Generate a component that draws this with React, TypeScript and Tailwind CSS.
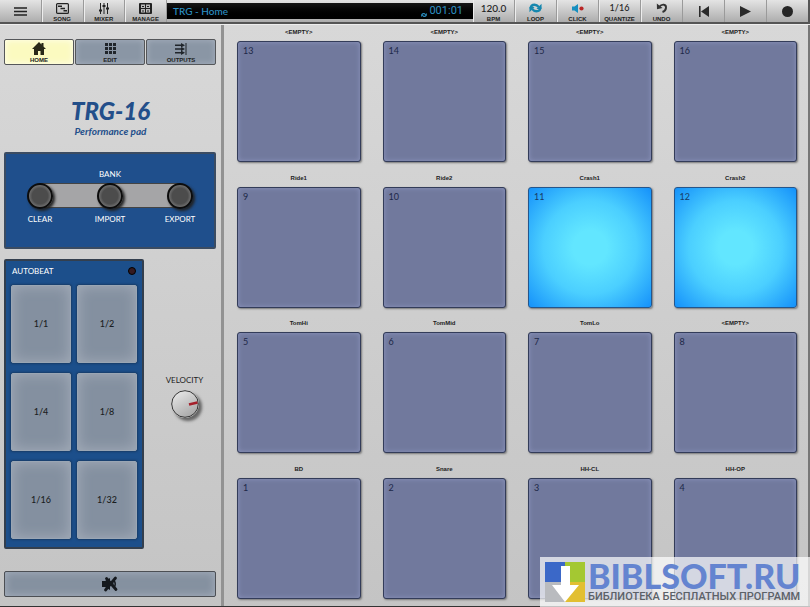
import { useState } from "react";
import type { ReactNode } from "react";

const pads = [
  { n: 13, name: "<EMPTY>" },
  { n: 14, name: "<EMPTY>" },
  { n: 15, name: "<EMPTY>" },
  { n: 16, name: "<EMPTY>" },
  { n: 9, name: "Ride1" },
  { n: 10, name: "Ride2" },
  { n: 11, name: "Crash1", lit: true },
  { n: 12, name: "Crash2", lit: true },
  { n: 5, name: "TomHi" },
  { n: 6, name: "TomMid" },
  { n: 7, name: "TomLo" },
  { n: 8, name: "<EMPTY>" },
  { n: 1, name: "BD" },
  { n: 2, name: "Snare" },
  { n: 3, name: "HH-CL" },
  { n: 4, name: "HH-OP" },
];

const beats = ["1/1", "1/2", "1/4", "1/8", "1/16", "1/32"];

function LoopIcon({ className }: { className: string }) {
  return (
    <svg viewBox="0 0 14 12" className={className} fill="none" stroke="currentColor" strokeWidth="2.600" aria-hidden="true">
      <path d="M1.800 6.500Q2 2.500 6 2.500 8.500 2.500 10.500 5" />
      <path d="M12.200 5.500Q12 9.500 8 9.500 5.500 9.500 3.500 7" />
      <path d="M13.500 1.500V7H8ZM.5 10.500V5H6Z" fill="currentColor" stroke="none" />
    </svg>
  );
}

function ToolButton({ label, children, name }: { label?: string; children: ReactNode; name?: string }) {
  return (
    <button
      type="button"
      aria-label={name}
      className="flex min-w-0 flex-1 flex-col items-center border-r border-[#9a9a9a] text-[#222] shadow-[inset_1px_0_0_#ededed]"
    >
      <span className="flex h-4 w-full items-center justify-center">{children}</span>
      {label && <span className="text-[6px] leading-[6px] font-bold">{label}</span>}
    </button>
  );
}

function Toolbar() {
  return (
    <header className="flex h-6 shrink-0 border-b-2 border-[#555] bg-linear-to-b from-[#e4e4e4] to-[#adadad]">
      <div className="flex w-[167px] shrink-0">
        <button type="button" aria-label="Menu" className="flex flex-1 items-center justify-center border-r border-[#9a9a9a]">
          <svg viewBox="0 0 13 9" className="h-[9px] w-[13px]" aria-hidden="true">
            <path d="M0 1H13M0 4.500H13M0 8H13" stroke="#222" strokeWidth="1.500" />
          </svg>
        </button>
        <ToolButton label="SONG">
          <svg viewBox="0 0 13 11" className="h-[11px] w-[13px]" fill="none" stroke="#222" aria-hidden="true">
            <rect x=".6" y=".6" width="11.800" height="9.800" rx="1" strokeWidth="1.200" />
            <path d="M2 3.200H6M4.500 5.500H9M7.500 7.800H11" strokeWidth="1.600" />
          </svg>
        </ToolButton>
        <ToolButton label="MIXER">
          <svg viewBox="0 0 10 11" className="h-[11px] w-[10px]" stroke="#222" aria-hidden="true">
            <path d="M1.500 0V11M5 0V11M8.500 0V11" strokeWidth="1" />
            <path d="M0 7.500H3M3.500 3H6.500M7 5.500H10" strokeWidth="2" />
          </svg>
        </ToolButton>
        <ToolButton label="MANAGE">
          <svg viewBox="0 0 13 11" className="h-[11px] w-[13px]" aria-hidden="true">
            <rect width="13" height="11" rx="1" fill="#222" />
            <path d="M2 1.500H6V5H2ZM7 1.500H11V5H7ZM2 6H6V9.500H2ZM7 6H11V9.500H7Z" fill="#bbb" />
            <path d="M3 3.500H5M8 3.500H10M3 8H5M8 8H10" stroke="#222" strokeWidth="1.200" />
          </svg>
        </ToolButton>
      </div>
      <div className="my-[3px] flex min-w-0 flex-1 items-center justify-between bg-linear-to-b from-[#171717] to-black px-[6px] text-[#2c91c5]">
        <span className="font-[Lato] text-[10px] leading-4 font-medium">TRG - Home</span>
        <span className="flex items-center gap-[2px]">
          <LoopIcon className="mt-2 h-[6px] w-[6px]" />
          <output className="pr-1 font-[Roboto] text-[11px] leading-3">001:01</output>
        </span>
      </div>
      <div className="flex w-[337px] shrink-0 border-r-2 border-[#555]">
        <ToolButton label="BPM">
          <span className="font-[Lato] text-[10px] leading-4 font-medium">120.0</span>
        </ToolButton>
        <ToolButton label="LOOP">
          <LoopIcon className="h-[12px] w-[13px] text-[#1687ae]" />
        </ToolButton>
        <ToolButton label="CLICK">
          <svg viewBox="0 0 12 9" className="h-[9px] w-[12px]" aria-hidden="true">
            <path d="M0 2.500H2.500L6 0V9L2.500 6.500H0Z" fill="#168fc0" />
            <circle cx="9.500" cy="4.500" r="2.100" fill="#b92525" />
          </svg>
        </ToolButton>
        <ToolButton label="QUANTIZE">
          <span className="font-[Lato] text-[9px] leading-4 font-medium">1/16</span>
        </ToolButton>
        <ToolButton label="UNDO">
          <svg viewBox="0 0 12 10" className="h-[10px] w-[12px]" aria-hidden="true">
            <path d="M3 4C6 .5 10.500 1 10 5Q9.500 8 6.500 9" fill="none" stroke="#333" strokeWidth="1.900" />
            <path d="M.8 .5 1 6.300 6.500 5Z" fill="#333" />
          </svg>
        </ToolButton>
        <button type="button" aria-label="Rewind" className="flex flex-1 items-center justify-center border-r border-[#9a9a9a]">
          <svg viewBox="0 0 10 11" className="h-[11px] w-[10px]" fill="#2a2a2a" aria-hidden="true">
            <path d="M0 0H1.600V11H0ZM10 0V11L2 5.500Z" />
          </svg>
        </button>
        <button type="button" aria-label="Play" className="flex flex-1 items-center justify-center border-r border-[#9a9a9a]">
          <svg viewBox="0 0 11 11" className="h-[11px] w-[11px]" fill="#2a2a2a" aria-hidden="true">
            <path d="M0 0 11 5.500 0 11Z" />
          </svg>
        </button>
        <button type="button" aria-label="Record" className="flex flex-1 items-center justify-center">
          <span className="size-[11px] rounded-full bg-[#262626]" />
        </button>
      </div>
    </header>
  );
}

function Tab({ label, active, children }: { label: string; active?: boolean; children: ReactNode }) {
  return (
    <button
      type="button"
      aria-pressed={!!active}
      className={
        active
          ? "flex h-[26px] flex-1 flex-col items-center rounded-[2px] border border-[#55575a] bg-[#fbfac0] text-[#222] shadow-[inset_0_0_6px_#fffff0]"
          : "flex h-[26px] flex-1 flex-col items-center rounded-[2px] border border-[#55575a] bg-[#8a96a5] text-[#222] shadow-[inset_0_0_6px_#a9b2bf]"
      }
    >
      <span className="flex h-[17px] items-center justify-center">{children}</span>
      <span className="text-[6px] leading-[6px] font-bold">{label}</span>
    </button>
  );
}

function BankButton({ label }: { label: string }) {
  return (
    <button type="button" className="relative flex w-[70px] flex-col items-center gap-[5px]">
      <span className="size-[26px] rounded-full border-2 border-[#0c0c0c] bg-[radial-gradient(circle,#4c4c4c_50%,#777_75%)] shadow-[2px_2px_3px_#222]" />
      <span className="text-[8px] leading-[10px] text-white">{label}</span>
    </button>
  );
}

function Sidebar() {
  const [velocity, setVelocity] = useState(80);
  return (
    <aside className="flex w-[221px] shrink-0 flex-col px-1 pt-[14px] pb-[9px] font-[Lato]">
      <nav className="mr-px flex gap-px font-['Liberation_Sans']">
        <Tab label="HOME" active>
          <svg viewBox="0 0 14 13" className="h-[13px] w-[14px]" fill="#292918" aria-hidden="true">
            <path d="M7 0 9.500 2.500V1H11.500V4.500L14 7H12V13H8.500V9H6V13H2V7H0Z" />
          </svg>
        </Tab>
        <Tab label="EDIT">
          <svg viewBox="0 0 11 11" className="h-[11px] w-[11px]" fill="#20252b" aria-hidden="true">
            <path d="M0 0H3V3H0ZM4 0H7V3H4ZM8 0H11V3H8ZM0 4H3V7H0ZM4 4H7V7H4ZM8 4H11V7H8ZM0 8H3V11H0ZM4 8H7V11H4ZM8 8H11V11H8Z" />
          </svg>
        </Tab>
        <Tab label="OUTPUTS">
          <svg viewBox="0 0 12 12" className="h-[12px] w-[12px]" fill="#20252b" aria-hidden="true">
            <path d="M0 1.500H6V0L10 2.200 6 4.400V3H0ZM0 5.300H6V3.800L10 6 6 8.200V6.800H0ZM0 9H6V7.600L10 9.800 6 12V10.500H0ZM10.500 0H11.500V12H10.500Z" />
          </svg>
        </Tab>
      </nav>

      <div className="mt-8 flex h-[55px] flex-col items-center font-[Lato] text-[#234f8a] italic">
        <h1 className="text-[24px] leading-7 font-black">TRG-16</h1>
        <p className="text-[10px] leading-3 font-bold">Performance pad</p>
      </div>

      <section aria-label="Bank" className="mr-px flex h-[97px] flex-col items-center rounded-[2px] border-2 border-[#3b4c62] bg-[#1f4f8c] pt-3">
        <h2 className="text-[8px] leading-4 text-white">BANK</h2>
        <div className="relative mt-px flex">
          <div className="absolute top-0 right-9 left-9 h-[25px] border-y border-[#444] bg-[#a5a5a7]" />
          <BankButton label="CLEAR" />
          <BankButton label="IMPORT" />
          <BankButton label="EXPORT" />
        </div>
      </section>

      <div className="mt-[10px] flex">
        <section aria-label="Autobeat" className="w-[140px] rounded-[2px] border-2 border-[#333f4e] bg-[#1c4f8b] px-[5px] pb-2">
          <div className="flex h-6 items-start justify-between px-px pt-px text-white">
            <h2 className="text-[8px] leading-[18px]">AUTOBEAT</h2>
            <span className="mt-[5px] size-2 rounded-full border border-black bg-[#351a20]" />
          </div>
          <div className="grid grid-cols-2 gap-x-[6px] gap-y-[10px]">
            {beats.map((b) => (
              <button
                key={b}
                type="button"
                className="h-[78px] rounded-[2px] border border-[#9aa6b4] bg-[#8490a0] text-[9px] font-medium text-[#1a1d20] shadow-[inset_0_0_14px_#a4adba,0_0_2px_1px_#183c68]"
              >
                {b}
              </button>
            ))}
          </div>
        </section>
        <div className="flex flex-1 flex-col items-center pt-[115px] pl-2">
          <label htmlFor="velocity" className="text-[8px] leading-3 text-[#222]">
            VELOCITY
          </label>
          <div className="relative mt-1 size-7">
            <svg viewBox="0 0 28 28" className="size-7 rounded-full shadow-[3px_3px_3px_#666]" aria-hidden="true">
              <defs>
                <linearGradient id="knob" x2="0.6" y2="1">
                  <stop stopColor="#eee" />
                  <stop offset="1" stopColor="#aaa" />
                </linearGradient>
              </defs>
              <circle cx="14" cy="14" r="13.300" fill="url(#knob)" stroke="#333" />
              <path d="M18 14.500 26.500 12.500" stroke="#a51f2b" strokeWidth="2.500" />
            </svg>
            <input
              id="velocity"
              type="range"
              min={0}
              max={127}
              value={velocity}
              onChange={(e) => setVelocity(Number(e.target.value))}
              className="absolute inset-0 size-7 cursor-pointer opacity-0"
            />
          </div>
        </div>
      </div>

      <button
        type="button"
        aria-label="Mute"
        className="mt-auto mr-px flex h-[26px] items-center justify-center rounded-[2px] border border-[#4c4f54] bg-[#8591a0] shadow-[inset_0_0_8px_#a9b2bf]"
      >
        <svg viewBox="0 0 16 16" className="size-4" aria-hidden="true">
          <path d="M0 5H3L8 2V14L3 11H0Z" fill="#15191e" />
          <path d="M10 6.500Q11.500 8 10 9.500M12 4.500Q14.500 8 12 11.500" fill="none" stroke="#15191e" strokeWidth="1.500" />
          <path d="M3.500 14 13.500 2M4.500 2.500 14 13.500" stroke="#15191e" strokeWidth="2.800" strokeLinecap="round" />
        </svg>
      </button>
    </aside>
  );
}

function Pad({ n, name, lit }: { n: number; name: string; lit?: boolean }) {
  return (
    <div className="min-w-0">
      <div id={`pad-${n}`} className="h-4 text-center text-[6px] leading-[14px] font-bold text-[#1c1c1c]">
        {name}
      </div>
      <button
        type="button"
        aria-describedby={`pad-${n}`}
        className={
          lit
            ? "flex h-[121px] w-full items-start rounded-[3px] border border-[#24568c] bg-[radial-gradient(circle,#62e6ff_20%,#4bcfff_55%,#1591fa_100%)] px-[5px] py-[3px] font-[Lato] text-[9px] leading-3 text-[#173b66] shadow-[1px_1px_2px_#777]"
            : "flex h-[121px] w-full items-start rounded-[3px] border border-[#333c59] bg-[#71799d] px-[5px] py-[3px] font-[Lato] text-[9px] leading-3 text-[#202848] shadow-[inset_0_0_5px_#8c95bd,1px_1px_2px_#777]"
        }
      >
        {n}
      </button>
    </div>
  );
}

function Watermark() {
  return (
    <div className="absolute right-0 bottom-0 flex h-[50px] w-[270px] items-start gap-[3px] bg-white/70 pt-[5px] pl-[5px]">
      <svg viewBox="0 0 40 40" className="size-10 shrink-0" aria-hidden="true">
        <path d="M0 0H20V20H0Z" fill="#3b68c8" />
        <path d="M20 0H40V20H20Z" fill="#a4c832" />
        <path d="M0 20H20V40H0Z" fill="#b9bbbf" />
        <path d="M20 20H40V40H20Z" fill="#e2bf32" />
        <path d="M16 4H25V23H34L20 40 7 23H16Z" fill="#fff" />
      </svg>
      <div className="whitespace-nowrap">
        <div className="font-[Lato] text-[34px] leading-7 font-black text-[#6484d0]">BIBLSOFT.RU</div>
        <div className="font-[Roboto] text-[11px] leading-[14px] font-medium text-[#5c6168]">
          БИБЛИОТЕКА БЕСПЛАТНЫХ ПРОГРАММ
        </div>
      </div>
    </div>
  );
}

export default function App() {
  return (
    <div className="relative flex min-h-screen flex-col bg-[#cbcbcb] font-['Liberation_Sans',Arial,sans-serif]">
      <Toolbar />
      <div className="flex flex-1 border-t border-b border-t-[#eee] border-b-[#333] bg-linear-to-b from-[#d8d8d8] to-[#c4c4c4]">
        <Sidebar />
        <main className="grid flex-1 grid-cols-4 content-between gap-x-[22px] border-r-2 border-l-3 border-r-[#777] border-l-[#929292] pr-[11px] pb-[7px] pl-[13px]">
          {pads.map((p) => (
            <Pad key={p.n} {...p} />
          ))}
        </main>
      </div>
      <Watermark />
    </div>
  );
}
